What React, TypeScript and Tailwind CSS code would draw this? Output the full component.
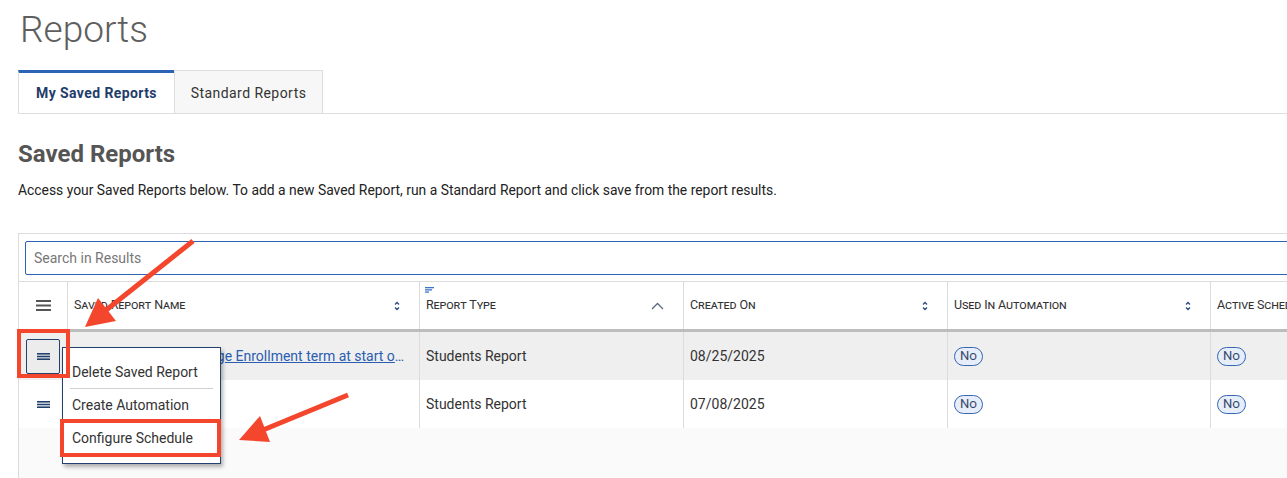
import React from 'react'

type Col = { label: string; width: string; icon: 'sort' | 'up'; filter?: boolean }

const columns: Col[] = [
  { label: 'Saved Report Name', width: 'w-[352px]', icon: 'sort' },
  { label: 'Report Type', width: 'w-[264px]', icon: 'up', filter: true },
  { label: 'Created On', width: 'w-[264px]', icon: 'sort' },
  { label: 'Used In Automation', width: 'w-[263px]', icon: 'sort' },
  { label: 'Active Schedule', width: 'w-[200px]', icon: 'sort' },
]

const rows = [
  { name: 'Students Missing College Enrollment term at start of semester', type: 'Students Report', created: '08/25/2025', open: true },
  { name: 'Fall Roster', type: 'Students Report', created: '07/08/2025', open: false },
]

function SortIcon() {
  return (
    <svg width="6" height="10" viewBox="0 0 6 10" fill="none" stroke="#2b4c7e" strokeWidth="1.3">
      <path d="M1 3.5 L3 1.5 L5 3.5" />
      <path d="M1 6.5 L3 8.5 L5 6.5" />
    </svg>
  )
}

function ChevronUp() {
  return (
    <svg width="13" height="8" viewBox="0 0 13 8" fill="none" stroke="#5a6b85" strokeWidth="1.3">
      <path d="M1 7 L6.5 1.5 L12 7" />
    </svg>
  )
}

function Hamburger({ color, w, h, stroke }: { color: string; w: number; h: number; stroke: number }) {
  return (
    <svg width={w} height={h} viewBox={`0 0 ${w} ${h}`} fill="none" stroke={color} strokeWidth={stroke}>
      <path d={`M0 ${stroke / 2} H${w}`} />
      <path d={`M0 ${h / 2} H${w}`} />
      <path d={`M0 ${h - stroke / 2} H${w}`} />
    </svg>
  )
}

function NoBadge() {
  return (
    <span className="inline-flex h-[19px] items-center rounded-full border border-[#3467b3] bg-[#e7eefa] px-[5px] text-[13px] text-[#34476b] [font-variant-caps:small-caps]">
      No
    </span>
  )
}

export default function App() {
  return (
    <div className="relative h-[478px] w-full overflow-hidden bg-white font-[Roboto,sans-serif] text-[#333]">
      <div className="pl-[18px]">
        <h1 className="pl-[2px] pt-[6px] text-[37px] font-light leading-[48px] text-[#5e5e5e]">Reports</h1>

        {/* tabs */}
        <div className="mt-[16px] flex border-b border-[#dedede]">
          <div className="flex h-[43px] w-[156px] items-center justify-center border-l border-t-[3px] border-l-[#dedede] border-t-[#2b63b5] bg-white pt-px text-[14px] font-bold tracking-[0.4px] text-[#1f3d6b]">
            My Saved Reports
          </div>
          <div className="flex h-[43px] w-[149px] items-center justify-center border border-b-0 border-[#dedede] bg-[#f7f7f7] pt-[2px] text-[14px] tracking-[0.45px] text-[#333]">
            Standard Reports
          </div>
        </div>

        <h2 className="mt-[24px] text-[24px] font-bold leading-[32px] text-[#555]">Saved Reports</h2>
        <p className="mt-[10px] text-[13.88px] leading-[20px] text-[#222]">
          Access your Saved Reports below. To add a new Saved Report, run a Standard Report and click save from the report results.
        </p>

        {/* grid */}
        <div className="mt-[33px] h-[260px] w-[1400px] border-l border-t border-[#dcdcdc] bg-[#fafafa]">
          <div className="bg-white px-[6px] pb-[6px] pt-[7px]">
            <div className="flex h-[34px] items-center rounded-[2px] border border-[#2f64b3] px-[8px] text-[14px] text-[#777]">
              Search in Results
            </div>
          </div>

          <div className="flex h-[51px] border-b-[3px] border-t border-b-[#bdbdbd] border-t-[#dcdcdc] bg-white">
            <div className="flex w-[49px] items-center justify-center border-r border-[#dcdcdc]">
              <Hamburger color="#555" w={15} h={11} stroke={2} />
            </div>
            {columns.map((c) => (
              <div key={c.label} className={`relative flex items-center justify-between border-r border-[#dcdcdc] pl-[6px] pr-[19px] ${c.width}`}>
                {c.filter && (
                  <svg className="absolute left-[5px] top-[5px]" width="10" height="6" viewBox="0 0 10 6" fill="#3c74cf">
                    <rect x="0" y="0" width="9" height="1.3" />
                    <rect x="0" y="2.2" width="7" height="1.3" />
                    <rect x="0" y="4.4" width="4" height="1.3" />
                  </svg>
                )}
                <span className="whitespace-nowrap text-[12.5px] tracking-[-0.1px] text-[#333] [font-variant-caps:small-caps]">{c.label}</span>
                {c.icon === 'sort' ? <SortIcon /> : <ChevronUp />}
              </div>
            ))}
          </div>

          {rows.map((r) => (
            <div key={r.created} className={`flex h-[48px] ${r.open ? 'bg-[#efefef]' : 'bg-white'}`}>
              <div className="relative flex w-[49px] items-center justify-center border-r border-[#dcdcdc]">
                {r.open ? (
                  <>
                    <div className="flex h-[35px] w-[34px] items-center justify-center rounded-[2px] border border-[#24406d] bg-[#ececec]">
                      <Hamburger color="#24406d" w={13} h={7} stroke={1.6} />
                    </div>
                    <div className="absolute left-[43px] top-[15px] z-10 w-[159px] border border-[#24406d] bg-white py-[8px] text-[14px] text-[#333] shadow-[2px_3px_4px_rgba(0,0,0,0.3)]">
                      <div className="flex h-[32px] items-center px-[9px]">Delete Saved Report</div>
                      <div className="mx-[7px] h-px bg-[#d0d0d0]" />
                      <div className="flex h-[33px] items-center px-[9px]">Create Automation</div>
                      <div className="flex h-[33px] items-center px-[9px]">Configure Schedule</div>
                    </div>
                  </>
                ) : (
                  <Hamburger color="#24406d" w={13} h={7} stroke={1.6} />
                )}
              </div>
              <div className="flex w-[352px] items-center border-r border-[#dcdcdc] pl-[6px] pr-[10px]">
                <a href="#" className="truncate text-[14px] text-[#2a5db0] underline">{r.name}</a>
              </div>
              <div className="flex w-[264px] items-center border-r border-[#dcdcdc] pl-[6px] text-[14px]">{r.type}</div>
              <div className="flex w-[264px] items-center border-r border-[#dcdcdc] pl-[6px] text-[14px]">{r.created}</div>
              <div className="flex w-[263px] items-center border-r border-[#dcdcdc] pl-[6px]"><NoBadge /></div>
              <div className="flex w-[200px] items-center border-r border-[#dcdcdc] pl-[6px]"><NoBadge /></div>
            </div>
          ))}
        </div>
      </div>

      {/* annotations */}
      <div className="pointer-events-none absolute left-[17px] top-[329px] z-20 h-[49px] w-[53px] border-[4px] border-[#f3462c]" />
      <div className="pointer-events-none absolute left-[60px] top-[419px] z-20 h-[38px] w-[161px] border-[4px] border-[#f3462c]" />
      <svg className="pointer-events-none absolute left-0 top-0 z-30" width="1287" height="478" viewBox="0 0 1287 478">
        <line x1="193" y1="241" x2="105" y2="311" stroke="#f3462c" strokeWidth="5" />
        <polygon points="85,327 116,321 98,298" fill="#f3462c" />
        <line x1="348" y1="395" x2="263" y2="430" stroke="#f3462c" strokeWidth="5" />
        <polygon points="239,440 270,442 260,416" fill="#f3462c" />
      </svg>
    </div>
  )
}
